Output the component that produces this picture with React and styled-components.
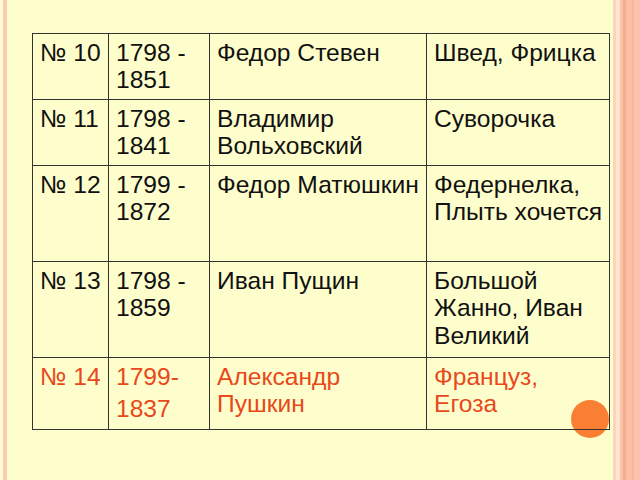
import React from 'react'
import styled, {createGlobalStyle} from 'styled-components'

const rows = [
  {num: '№ 10', years: ['1798 -', '1851'], name: ['Федор Стевен'], nick: ['Швед, Фрицка'], h: 66},
  {num: '№ 11', years: ['1798 -', '1841'], name: ['Владимир', 'Вольховский'], nick: ['Суворочка'], h: 66},
  {num: '№ 12', years: ['1799 -', '1872'], name: ['Федор Матюшкин'], nick: ['Федернелка,', 'Плыть хочется'], h: 96},
  {num: '№ 13', years: ['1798 -', '1859'], name: ['Иван Пущин'], nick: ['Большой', 'Жанно, Иван', 'Великий'], h: 96},
  {num: '№ 14', years: ['1799-', '1837'], name: ['Александр', 'Пушкин'], nick: ['Француз,', 'Егоза'], h: 72, hot: true, spaced: true},
]

export default () => (
  <>
    <Global/>
    <Slide>
      <Table>
        <colgroup>
          <col style={{width: 76}}/>
          <col style={{width: 101}}/>
          <col style={{width: 217}}/>
          <col style={{width: 183}}/>
        </colgroup>
        <tbody>
          {rows.map(r => (
            <Row key={r.num} $h={r.h} $hot={r.hot}>
              <Cell>{r.num}</Cell>
              <Cell>{r.years.map((t, i) => <Line key={i} $gap={r.spaced && i > 0}>{t}</Line>)}</Cell>
              <Cell>{r.name.map((t, i) => <Line key={i}>{t}</Line>)}</Cell>
              <Cell>{r.nick.map((t, i) => <Line key={i}>{t}</Line>)}</Cell>
            </Row>
          ))}
        </tbody>
      </Table>
      <Dot/>
    </Slide>
  </>
)


let Global = createGlobalStyle`
  body { margin: 0; }
`

// stripes on the left and right edge of the slide
let Slide = styled.div`
  position: relative;
  width: 640px;
  height: 480px;
  box-sizing: border-box;
  padding: 33px 0 0 32px;
  overflow: hidden;
  background: linear-gradient(90deg,
    #fefecc 0 3px, #f9cbb8 3px 7px, #fefecc 7px 613px,
    #fbd3c0 613px 616px, #fde6cc 616px 620px, #fbc2aa 620px 623px,
    #f8ac90 623px 626px, #fbbfa6 626px 632px, #f9b69c 632px 634px,
    #fcc3ab 634px 640px);
  font-family: "Liberation Sans", Arial, sans-serif;
`

let Table = styled.table`
  position: relative;
  z-index: 2;
  width: 577px;
  table-layout: fixed;
  border-collapse: collapse;
  background: transparent;
`

let Row = styled.tr`
  height: ${p => p.$h}px;
  color: ${p => p.$hot ? '#e8481c' : '#111'};
`

let Cell = styled.td`
  border: 1px solid #333;
  padding: 5px 4px 0 7px;
  vertical-align: top;
  font-size: 24.6px;
  line-height: 27.3px;
  white-space: nowrap;
`

let Line = styled.div`
  margin-top: ${p => p.$gap ? '5px' : '0'};
`

let Dot = styled.div`
  position: absolute;
  z-index: 1;
  left: 571px;
  top: 400px;
  width: 38px;
  height: 38px;
  border-radius: 50%;
  background: #fb7f33;
`
